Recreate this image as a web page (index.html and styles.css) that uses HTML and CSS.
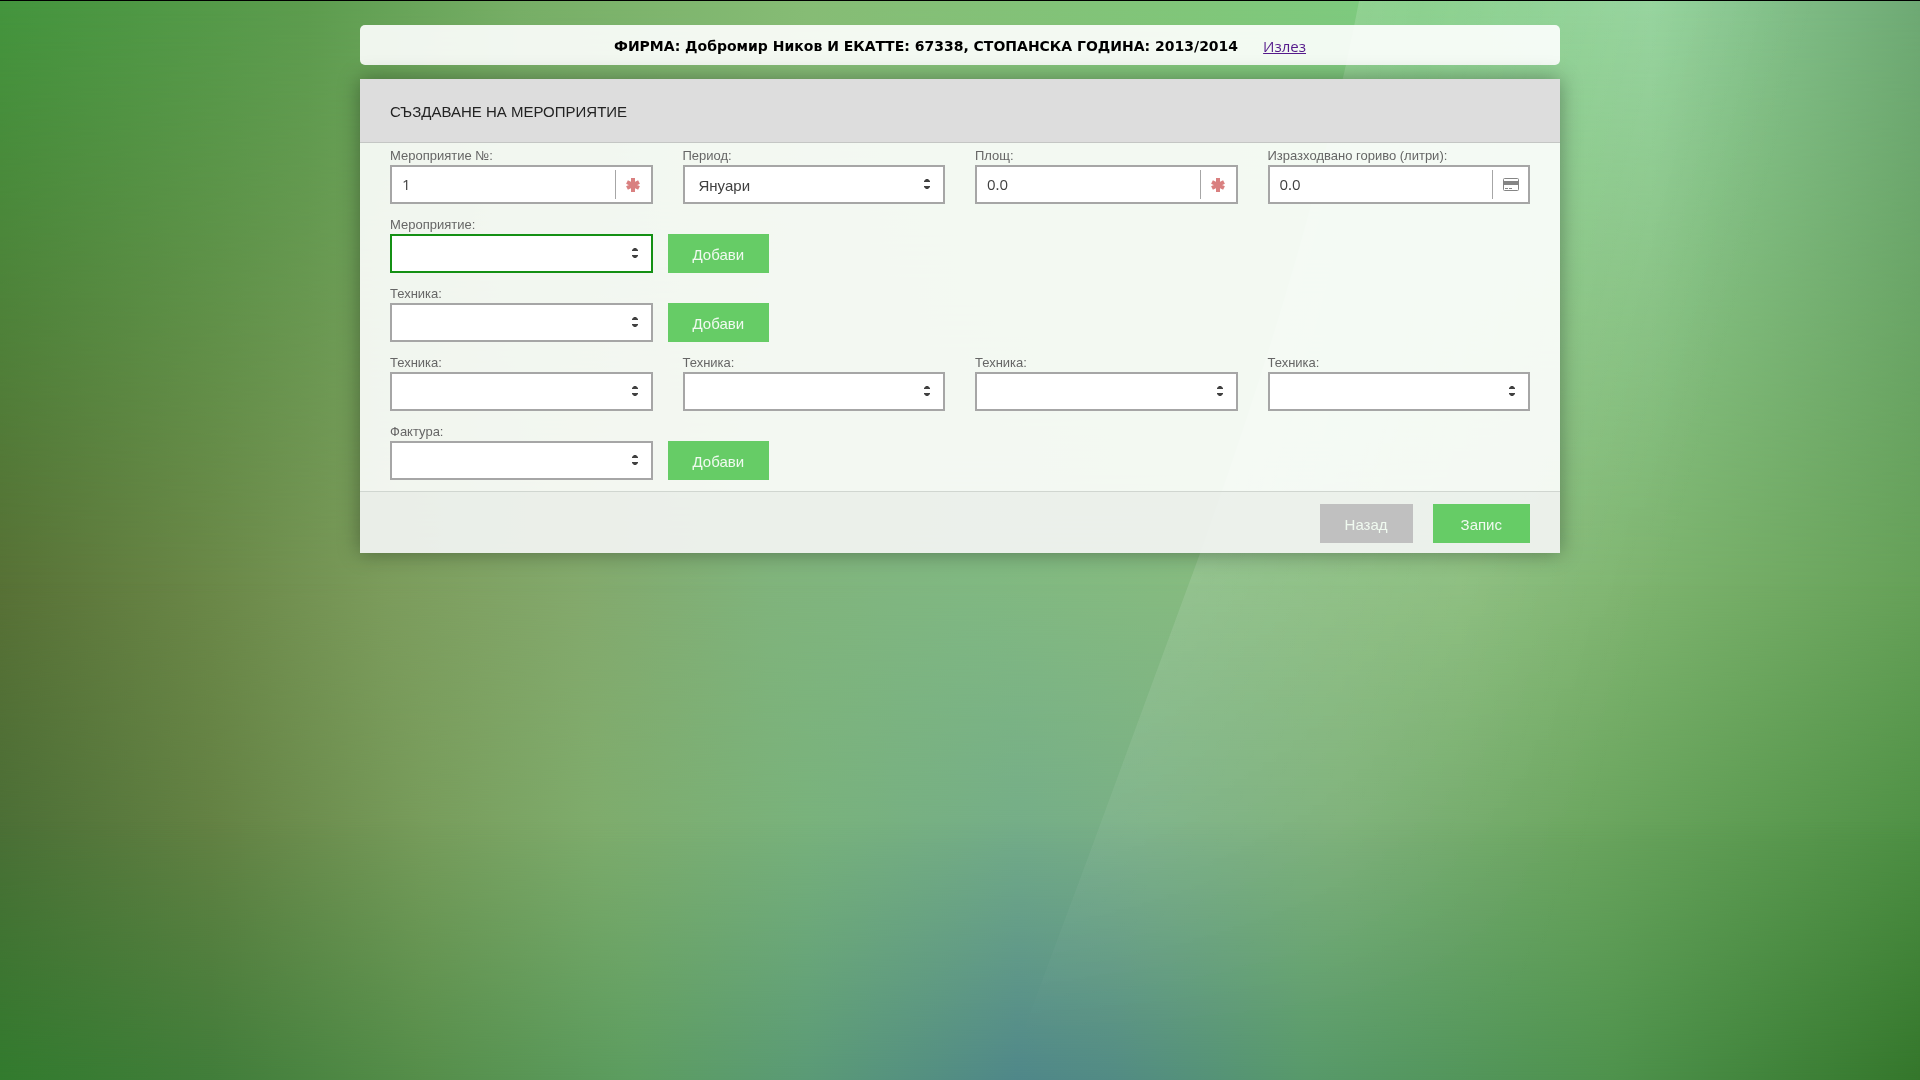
FILE: index.html
```html
<!DOCTYPE html>
<html lang="bg">
<head>
    <meta charset="utf-8">
    <title>Създаване на мероприятие</title>
    <link rel="stylesheet" href="styles.css">
</head>
<body>

    <div class="backdrop">
        <div class="band band-top"></div>
        <div class="band band-low"></div>
        <div class="band band-bottom"></div>
        <svg class="sheen" viewBox="0 0 1920 1080" preserveAspectRatio="none" aria-hidden="true">
            <defs>
                <linearGradient id="sheen" x1="1200" y1="0" x2="1780" y2="150" gradientUnits="userSpaceOnUse">
                    <stop offset="0" stop-color="#fff" stop-opacity=".2"/>
                    <stop offset="1" stop-color="#fff" stop-opacity="0"/>
                </linearGradient>
            </defs>
            <path fill="url(#sheen)" d="M1359 0C1325 180 1262 380 1200 553L1087 860L1005 1080H1920V0Z"/>
        </svg>
    </div>

    <header class="topbar">
        <strong>ФИРМА: Добромир Ников И ЕКАТТЕ: 67338, СТОПАНСКА ГОДИНА: 2013/2014</strong>
        <a href="#">Излез</a>
    </header>

    <form class="card">
        <h1>СЪЗДАВАНЕ НА МЕРОПРИЯТИЕ</h1>

        <div class="fields">
            <div class="field">
                <label for="number">Мероприятие №:</label>
                <div class="control">
                    <input id="number" type="text" value="1">
                    <span class="addon required">
                        <svg width="14" height="14" viewBox="0 0 14 14"><path d="M7 0v14M1 4l12 6M1 10l12-6"/></svg>
                    </span>
                </div>
            </div>
            <div class="field">
                <label for="period">Период:</label>
                <div class="control">
                    <select id="period"><option>Януари</option></select>
                    <svg class="arrows" width="6" height="10" viewBox="0 0 6 10"><path d="M0 3V2l2-2h2l2 2v1zM0 7v1l2 2h2l2-2V7z"/></svg>
                </div>
            </div>
            <div class="field">
                <label for="area">Площ:</label>
                <div class="control">
                    <input id="area" type="text" value="0.0">
                    <span class="addon required">
                        <svg width="14" height="14" viewBox="0 0 14 14"><path d="M7 0v14M1 4l12 6M1 10l12-6"/></svg>
                    </span>
                </div>
            </div>
            <div class="field">
                <label for="fuel">Изразходвано гориво (литри):</label>
                <div class="control">
                    <input id="fuel" type="text" value="0.0">
                    <span class="addon">
                        <svg width="16" height="13" viewBox="0 0 16 13"><rect x=".5" y=".5" width="15" height="12" rx="1" fill="none" stroke="#858585"/><path fill="#858585" d="M1 3h14v4H1zM2 10h3v1H2zM6 10h3v1H6z"/></svg>
                    </span>
                </div>
            </div>

            <div class="field first">
                <label for="event">Мероприятие:</label>
                <div class="control">
                    <select id="event" class="active"><option></option></select>
                    <svg class="arrows" width="6" height="10" viewBox="0 0 6 10"><path d="M0 3V2l2-2h2l2 2v1zM0 7v1l2 2h2l2-2V7z"/></svg>
                </div>
            </div>
            <button class="btn add" type="button">Добави</button>

            <div class="field first">
                <label for="machine">Техника:</label>
                <div class="control">
                    <select id="machine"><option></option></select>
                    <svg class="arrows" width="6" height="10" viewBox="0 0 6 10"><path d="M0 3V2l2-2h2l2 2v1zM0 7v1l2 2h2l2-2V7z"/></svg>
                </div>
            </div>
            <button class="btn add" type="button">Добави</button>

            <div class="field first">
                <label for="machine1">Техника:</label>
                <div class="control">
                    <select id="machine1"><option></option></select>
                    <svg class="arrows" width="6" height="10" viewBox="0 0 6 10"><path d="M0 3V2l2-2h2l2 2v1zM0 7v1l2 2h2l2-2V7z"/></svg>
                </div>
            </div>
            <div class="field">
                <label for="machine2">Техника:</label>
                <div class="control">
                    <select id="machine2"><option></option></select>
                    <svg class="arrows" width="6" height="10" viewBox="0 0 6 10"><path d="M0 3V2l2-2h2l2 2v1zM0 7v1l2 2h2l2-2V7z"/></svg>
                </div>
            </div>
            <div class="field">
                <label for="machine3">Техника:</label>
                <div class="control">
                    <select id="machine3"><option></option></select>
                    <svg class="arrows" width="6" height="10" viewBox="0 0 6 10"><path d="M0 3V2l2-2h2l2 2v1zM0 7v1l2 2h2l2-2V7z"/></svg>
                </div>
            </div>
            <div class="field">
                <label for="machine4">Техника:</label>
                <div class="control">
                    <select id="machine4"><option></option></select>
                    <svg class="arrows" width="6" height="10" viewBox="0 0 6 10"><path d="M0 3V2l2-2h2l2 2v1zM0 7v1l2 2h2l2-2V7z"/></svg>
                </div>
            </div>

            <div class="field first">
                <label for="invoice">Фактура:</label>
                <div class="control">
                    <select id="invoice"><option></option></select>
                    <svg class="arrows" width="6" height="10" viewBox="0 0 6 10"><path d="M0 3V2l2-2h2l2 2v1zM0 7v1l2 2h2l2-2V7z"/></svg>
                </div>
            </div>
            <button class="btn add" type="button">Добави</button>
        </div>

        <footer>
            <button class="btn back" type="button">Назад</button>
            <button class="btn save" type="submit">Запис</button>
        </footer>
    </form>

</body>
</html>
```
FILE: styles.css
```css
* {
    box-sizing: border-box;
}
html {
    height: 100%;
}
body {
    min-height: 100%;
    margin: 0;
    padding: 24px 20px;
    border-top: 1px solid #000;
    font-family: "Liberation Sans", Arial, sans-serif;
}

/* page background */
.backdrop {
    position: fixed;
    inset: 1px 0 0;
    z-index: -1;
    background: linear-gradient(90deg, #587136 0%, #6b8848 11%, #7c9c5c 20%, #84a96c 30%, #80b47c 40%, #80b882 50%, #86bb80 62%, #8abd7c 76%, #80b671 84%, #66a158 100%);
}
.band {
    position: absolute;
    inset: 0;
}
.band-top {
    background: linear-gradient(90deg, #43953d 0%, #5c9c4e 16%, #76ae66 27%, #86bc75 42%, #80c679 62%, #7ccb80 74%, #92d29a 86%, #6ea974 100%);
    -webkit-mask-image: linear-gradient(#000, transparent 55%);
    mask-image: linear-gradient(#000, transparent 55%);
}
.band-low {
    background: linear-gradient(90deg, #4b6f36 0%, #638143 11%, #779c5b 22%, #7eac6c 31%, #78b27c 42%, #74ad88 53%, #7ab085 60%, #7cb078 70%, #6ca660 82%, #4e9044 100%);
    -webkit-mask-image: linear-gradient(transparent 54%, #000 78%);
    mask-image: linear-gradient(transparent 54%, #000 78%);
}
.band-bottom {
    background: linear-gradient(90deg, #327b2e 0%, #417d3a 11%, #558e4a 22%, #5c9d60 33%, #5a9a76 42%, #4f8789 53%, #528b84 58%, #57996a 68%, #4e924c 84%, #34762b 100%);
    -webkit-mask-image: linear-gradient(transparent 76%, #000);
    mask-image: linear-gradient(transparent 76%, #000);
}
.sheen {
    position: absolute;
    width: 100%;
    height: 100%;
    -webkit-mask-image: linear-gradient(#000 40%, transparent 97%);
    mask-image: linear-gradient(#000 40%, transparent 97%);
}

.topbar {
    display: flex;
    align-items: center;
    justify-content: center;
    gap: 25px;
    max-width: 1200px;
    height: 40px;
    margin: 0 auto 14px;
    padding-top: 1px;
    border-radius: 5px;
    background: rgba(255,255,255,0.9);
    font-size: 14px;
}
.topbar strong {
    font-family: Verdana, "DejaVu Sans", sans-serif;
    color: #000;
}
.topbar a {
    font-family: "Open Sans", sans-serif;
    font-size: 15px;
    color: #551a8b;
}

.card {
    max-width: 1200px;
    margin: 0 auto;
    background: rgba(255,255,255,0.9);
    box-shadow: 0 0 20px rgba(0,0,0,0.35);
}
.card h1 {
    margin: 0;
    padding: 21px 30px 19px;
    border-bottom: 1px solid #c4c6c4;
    background: #ddd;
    font-size: 15px;
    font-weight: normal;
    line-height: 23px;
    color: #232323;
}
.fields {
    display: grid;
    grid-template-columns: repeat(4, 1fr);
    gap: 8px 30px;
    padding: 0 30px 11px;
}
.first {
    grid-column: 1;
}
.field label {
    display: block;
    padding-top: 4px;
    font-size: 13px;
    line-height: 18px;
    color: #666;
}
.control {
    position: relative;
}
.control input,
.control select {
    display: block;
    width: 100%;
    height: 39px;
    margin: 0;
    border: 2px solid #a6a6a6;
    border-radius: 0;
    outline: none;
    background: #fff;
    font-family: "Open Sans", sans-serif;
    font-size: 15px;
    color: #404040;
}
.control input {
    padding: 0 50px 1px 10px;
}
.control select {
    padding: 1px 30px 0 14px;
    appearance: none;
    font-family: "Liberation Sans", Arial, sans-serif;
}
.control select.active {
    border-color: #149014;
}
.arrows {
    position: absolute;
    top: 14px;
    right: 15px;
    fill: #404040;
    pointer-events: none;
}
.addon {
    position: absolute;
    top: 5px;
    right: 2px;
    display: flex;
    align-items: center;
    justify-content: center;
    width: 36px;
    height: 29px;
    border-left: 1px solid #a6a6a6;
}
.required path {
    stroke: #d98080;
    stroke-width: 4;
}

.btn {
    height: 39px;
    padding: 2px 25px 0;
    border: 0;
    background: #66cc66;
    font-family: "Liberation Sans", Arial, sans-serif;
    font-size: 15px;
    color: #f0faf0;
    cursor: pointer;
}
.add {
    align-self: end;
    justify-self: start;
    margin-left: -15px;
}
.back {
    background: #c0c0c0;
}
.save {
    padding: 2px 28px 0;
}
.card footer {
    display: flex;
    justify-content: flex-end;
    gap: 20px;
    padding: 12px 30px 10px;
    border-top: 1px solid #d0d6d0;
    background: rgba(222,228,222,0.4);
}
```
